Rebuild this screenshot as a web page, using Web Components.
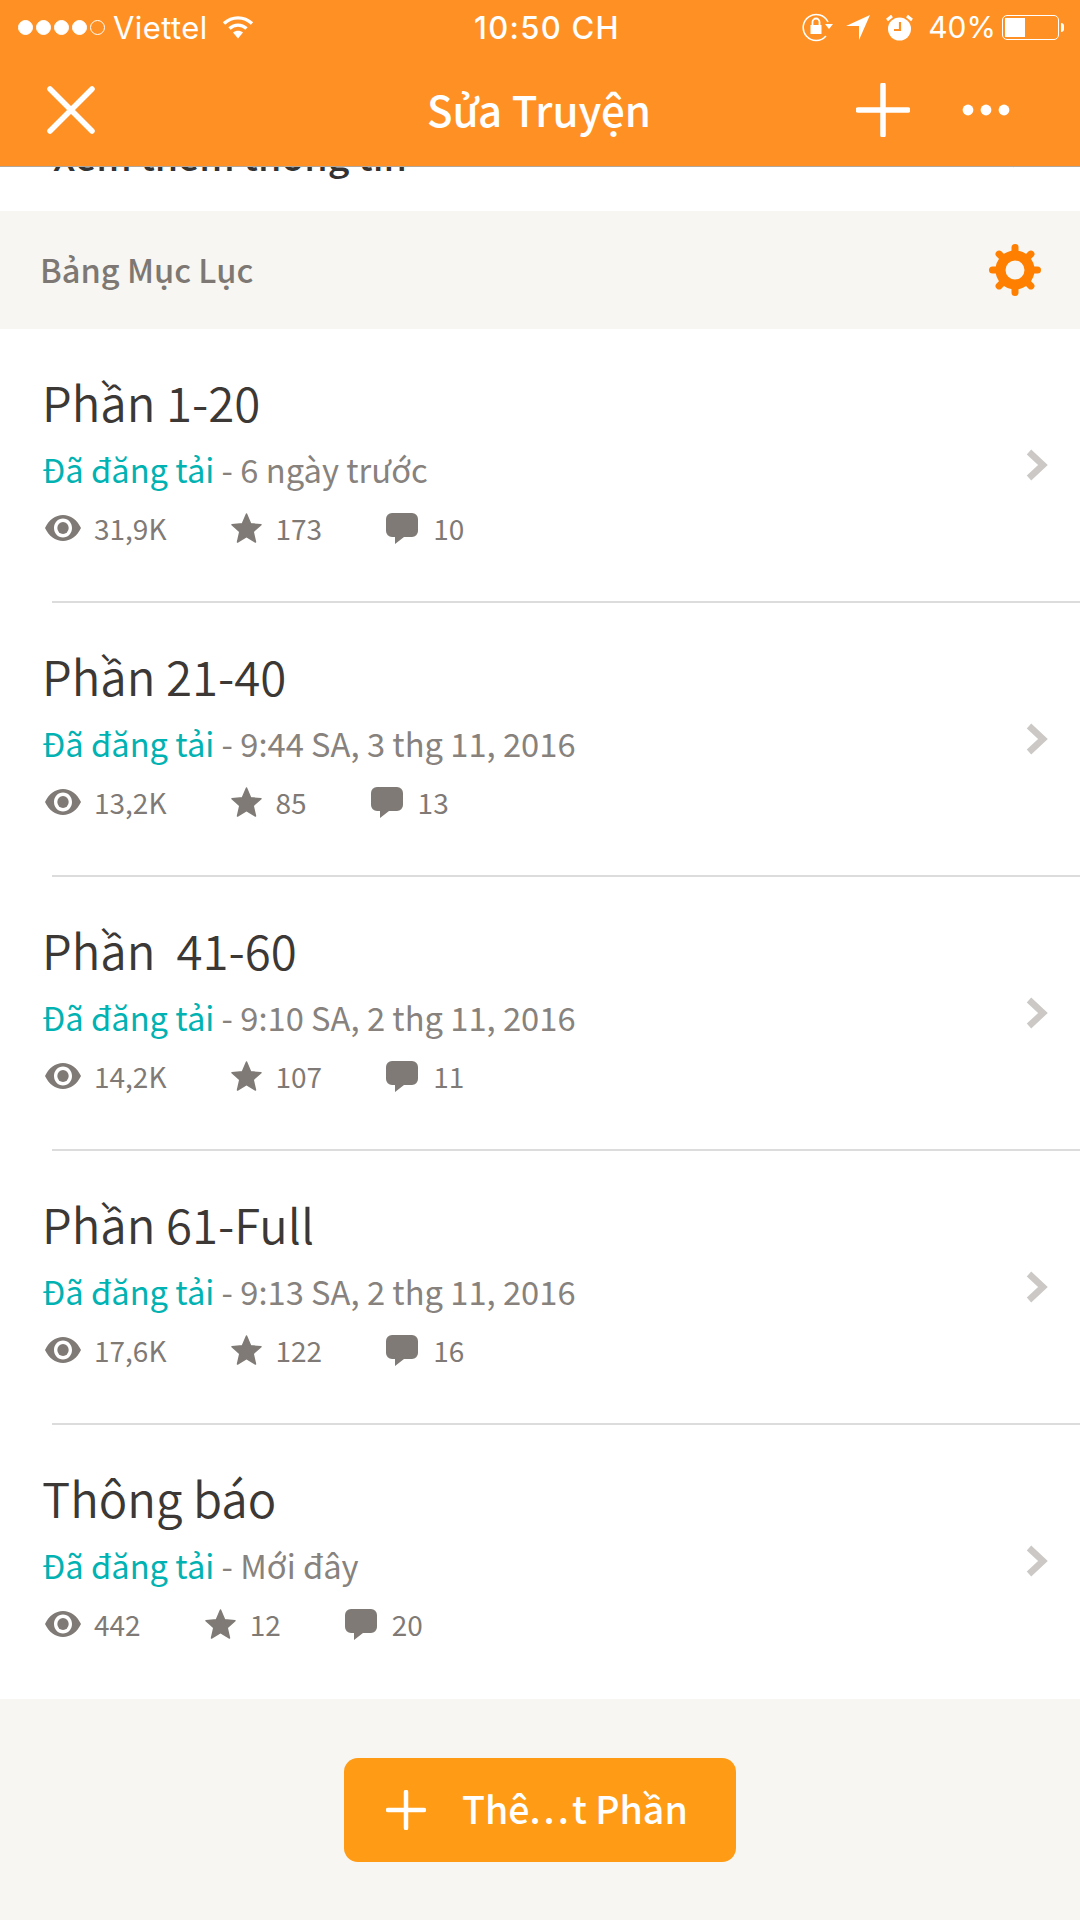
<!DOCTYPE html>
<html>
<head>
<meta charset="utf-8">
<style>
    html, body{ margin: 0; padding: 0; background: #f7f6f2; }
    body{ width: 1080px; height: 1920px; overflow: hidden; font-family: "Noto Sans CJK JP", "Noto Sans", sans-serif; }
    app-screen{ width: 1080px; height: 1920px; }
</style>
</head>
<body>
<app-screen>
    <status-bar slot="top"></status-bar>
    <nav-bar slot="top" title="Sửa Truyện"></nav-bar>
    <peek-row>Xem thêm thông tin</peek-row>
    <section-header>Bảng Mục Lục</section-header>
    <part-row name="Phần 1-20" time="6 ngày trước" views="31,9K" stars="173" comments="10"></part-row>
    <part-row name="Phần 21-40" time="9:44 SA, 3 thg 11, 2016" views="13,2K" stars="85" comments="13"></part-row>
    <part-row name="Phần &nbsp;41-60" time="9:10 SA, 2 thg 11, 2016" views="14,2K" stars="107" comments="11"></part-row>
    <part-row name="Phần 61-Full" time="9:13 SA, 2 thg 11, 2016" views="17,6K" stars="122" comments="16"></part-row>
    <part-row name="Thông báo" time="Mới đây" views="442" stars="12" comments="20" last></part-row>
    <add-button>Thê<span style="letter-spacing:3px">...</span>t Phần</add-button>
</app-screen>

<script>
const chevron = `<svg width="24" height="36" viewBox="0 0 24 36"><path d="M5 5l14 13L5 31" fill="none" stroke="#cbc8c5" stroke-width="6.500"/></svg>`;

class AppScreen extends HTMLElement{
    constructor(){
        super();
        this.attachShadow({mode: 'open'}).innerHTML = `
            <style>
                :host{ display: flex; flex-direction: column; background: #f7f6f2; }
                header{ background: #ff9124; border-bottom: 1px solid #b3a79a; height: 166px; flex: none; }
            </style>
            <header><slot name="top"></slot></header>
            <slot></slot>
        `;
    }
}
customElements.define('app-screen', AppScreen);

class StatusBar extends HTMLElement{
    constructor(){
        super();
        this.attachShadow({mode: 'open'}).innerHTML = `
            <style>
                :host{ display: grid; grid-template-columns: 1fr auto 1fr; align-items: center; height: 54px; padding: 0 16px 0 18px;
                    color: #fff; font: 400 31px Inter, Roboto, sans-serif; }
                .left, .right{ display: flex; align-items: center; }
                .right{ justify-content: flex-end; }
                .dots{ display: flex; gap: 3px; margin-right: 8px; }
                .dots i{ width: 15px; height: 15px; border-radius: 50%; background: #fff; border: 1px solid #fff; box-sizing: border-box; }
                .dots i.off{ background: none; }
                .carrier{ letter-spacing: .4px; margin-right: 14px; }
                .time{ font-weight: 500; letter-spacing: 1.300px; padding-left: 12px; }
                svg{ display: block; }
                .batt{ width: 57px; height: 25px; border: 1.5px solid #fff; border-radius: 5px; box-sizing: border-box; padding: 2px; margin-left: 6px; }
                .batt b{ display: block; width: 40%; height: 100%; background: #fff; }
                .nub{ width: 3px; height: 9px; background: #fff; border-radius: 0 3px 3px 0; margin-left: 2px; }
            </style>
            <div class="left">
                <div class="dots"><i></i><i></i><i></i><i></i><i class="off"></i></div>
                <span class="carrier">Viettel</span>
                <svg width="32" height="24" viewBox="0 0 32 24"><g fill="none" stroke="#fff" stroke-width="3.400"><path d="M2 8.5C10 1 22 1 30 8.5"/><path d="M7.5 13.5C12.5 9 19.5 9 24.5 13.5"/></g><path d="M11 17.500c2.800-2.500 7.200-2.500 10 0L16 23.500z" fill="#fff"/></svg>
            </div>
            <span class="time">10:50 CH</span>
            <div class="right">
                <svg width="32" height="30" viewBox="0 0 32 30" style="margin-right:12px"><path d="M26 10A13 13 0 1 0 24 24" fill="none" stroke="#fff" stroke-width="1.5"/><path d="M23 12h8l-4 5z" fill="#fff"/><rect x="8.5" y="13" width="11" height="9" fill="#fff"/><path d="M10.5 13V10a3.5 3.5 0 0 1 7 0v3" fill="none" stroke="#fff" stroke-width="1.8"/></svg>
                <svg width="24" height="25" viewBox="0 0 24 25" style="margin-right:16px"><path d="M24 0L13 25V11H0z" fill="#fff"/></svg>
                <svg width="27" height="27" viewBox="0 0 27 27" style="margin-right:15px"><circle cx="13.5" cy="15" r="11.5" fill="#fff"/><path d="M14 8v8H8" fill="none" stroke="#ff9124" stroke-width="2.2"/><path d="M1 6l5-4M26 6l-5-4" stroke="#fff" stroke-width="3"/></svg>
                <span style="font-size:30px">40%</span>
                <div class="batt"><b></b></div>
                <div class="nub"></div>
            </div>
        `;
    }
}
customElements.define('status-bar', StatusBar);

class NavBar extends HTMLElement{
    constructor(){
        super();
        this.attachShadow({mode: 'open'}).innerHTML = `
            <style>
                :host{ display: flex; align-items: center; height: 112px; padding: 0 70px 0 47px; color: #fff; }
                h1{ flex: 1; margin: -4px 0 0 0; text-align: center; font: 500 42px "Noto Sans CJK JP", "Noto Sans", sans-serif; padding-left: 127px; }
                svg{ display: block; }
            </style>
            <svg width="48" height="48" viewBox="0 0 48 48"><path d="M3 3l42 42M45 3L3 45" stroke="#fff" stroke-width="5.5" stroke-linecap="round"/></svg>
            <h1></h1>
            <svg width="54" height="54" viewBox="0 0 54 54" style="margin-right:52px"><path d="M27 2v50M2 27h50" stroke="#fff" stroke-width="5.5" stroke-linecap="round"/></svg>
            <svg width="48" height="12" viewBox="0 0 48 12"><circle cx="6" cy="6" r="5.4" fill="#fff"/><circle cx="24" cy="6" r="5.4" fill="#fff"/><circle cx="42" cy="6" r="5.4" fill="#fff"/></svg>
        `;
        this.shadowRoot.querySelector('h1').textContent = this.getAttribute('title');
    }
}
customElements.define('nav-bar', NavBar);

class PeekRow extends HTMLElement{
    constructor(){
        super();
        this.attachShadow({mode: 'open'}).innerHTML = `
            <style>
                :host{ display: block; height: 44px; overflow: hidden; background: #fff; }
                div{ display: flex; justify-content: space-between; align-items: flex-start; margin-top: -46px; height: 68px;
                    padding: 0 50px 0 53px; font: 500 37.5px/68px "Noto Sans CJK JP", "Noto Sans", sans-serif; color: #333; }
                svg{ display: block; margin-top: 13px; }
            </style>
            <div><span><slot></slot></span>${chevron}</div>
        `;
    }
}
customElements.define('peek-row', PeekRow);

class SectionHeader extends HTMLElement{
    constructor(){
        super();
        let teeth = '';
        for(let a = 0; a < 360; a += 45)
            teeth += `<path d="M27 4.5V12" transform="rotate(${a} 27 27)"/>`;
        this.attachShadow({mode: 'open'}).innerHTML = `
            <style>
                :host{ display: flex; align-items: center; justify-content: space-between; height: 118px; padding: 0 38px 0 40px; box-sizing: border-box;
                    background: #f7f6f2; color: #7d7873; font: 500 32.6px "Noto Sans CJK JP", "Noto Sans", sans-serif; }
                span{ margin-top: -4px; }
                svg{ display: block; }
            </style>
            <span><slot></slot></span>
            <svg width="54" height="54" viewBox="0 0 54 54"><circle cx="27" cy="27" r="14.5" fill="none" stroke="#ff7f00" stroke-width="10"/><g stroke="#ff7f00" stroke-width="7" stroke-linecap="round">${teeth}</g></svg>
        `;
    }
}
customElements.define('section-header', SectionHeader);

class PartRow extends HTMLElement{
    constructor(){
        super();
        const a = n => this.getAttribute(n);
        this.attachShadow({mode: 'open'}).innerHTML = `
            <style>
                :host{ display: block; height: 274px; box-sizing: border-box; background: #fff; position: relative; padding: 40px 0 0 42px;
                    font-family: "Noto Sans CJK JP", "Noto Sans", sans-serif; }
                :host::after{ content: ""; position: absolute; left: 52px; right: 0; bottom: 0; height: 2px; background: #dcdcdc; }
                :host([last])::after{ display: none; }
                h2{ margin: 0; font-size: 47.4px; font-weight: 350; line-height: 66px; color: #3b3835; white-space: pre; }
                .sub{ font-size: 32.7px; line-height: 48px; margin-top: 10px; color: #87827d; }
                .sub b{ font-weight: 400; color: #00b2b2; }
                .stats{ display: flex; align-items: center; gap: 64px; margin: 15px 0 0 3px; color: #7f7a75; font-size: 28px; line-height: 40px; }
                .stats span{ display: flex; align-items: center; gap: 13px; }
                .stats span:nth-child(2){ gap: 14px; }
                .stats span:last-child{ gap: 15px; }
                svg{ display: block; flex: none; }
                .chev{ position: absolute; right: 32px; top: 118px; }
            </style>
            <h2></h2>
            <div class="sub"><b>Đã đăng tải</b> - ${a('time')}</div>
            <div class="stats">
                <span><svg width="36" height="26" viewBox="0 0 38 26" preserveAspectRatio="none"><path fill-rule="evenodd" fill="#7f7a75" d="M19 0C27 0 34 5 38 13 34 21 27 26 19 26S4 21 0 13C4 5 11 0 19 0zM19 3.500C13.600 3.500 9.500 7.700 9.500 13S13.600 22.500 19 22.500 28.500 18.300 28.500 13 24.400 3.500 19 3.500z"/><circle cx="19" cy="13" r="6" fill="#7f7a75"/></svg>${a('views')}</span>
                <span><svg width="31" height="30" viewBox="0 0 32 31"><path fill="#7f7a75" stroke="#7f7a75" stroke-width="1.500" stroke-linejoin="round" d="M16 1l4.300 10.200 10.700.9-8.100 7.100 2.400 10.800L16 24.300 6.700 30l2.400-10.800L1 12.100l10.700-.9z"/></svg>${a('stars')}</span>
                <span><svg width="32" height="31" viewBox="0 0 32 31"><path fill="#7f7a75" d="M6 0h20a6 6 0 0 1 6 6v12a6 6 0 0 1-6 6H18l-9 7v-7H6a6 6 0 0 1-6-6V6a6 6 0 0 1 6-6z"/></svg>${a('comments')}</span>
            </div>
            <div class="chev">${chevron}</div>
        `;
        this.shadowRoot.querySelector('h2').textContent = a('name');
    }
}
customElements.define('part-row', PartRow);

class AddButton extends HTMLElement{
    constructor(){
        super();
        this.attachShadow({mode: 'open'}).innerHTML = `
            <style>
                :host{ display: flex; justify-content: center; padding-top: 59px; }
                button{ display: flex; align-items: center; gap: 36px; width: 392px; height: 104px; padding: 0 0 0 42px; box-sizing: border-box;
                    border: 0; border-radius: 14px; background: #ff9b14; color: #fff; font: 500 37.5px "Noto Sans CJK JP", "Noto Sans", sans-serif; }
                span{ margin-top: -6px; }
                svg{ display: block; flex: none; }
            </style>
            <button>
                <svg width="40" height="40" viewBox="0 0 40 40"><path d="M20 2v36M2 20h36" stroke="#fff" stroke-width="4.500" stroke-linecap="round"/></svg>
                <span><slot></slot></span>
            </button>
        `;
    }
}
customElements.define('add-button', AddButton);
</script>
</body>
</html>
